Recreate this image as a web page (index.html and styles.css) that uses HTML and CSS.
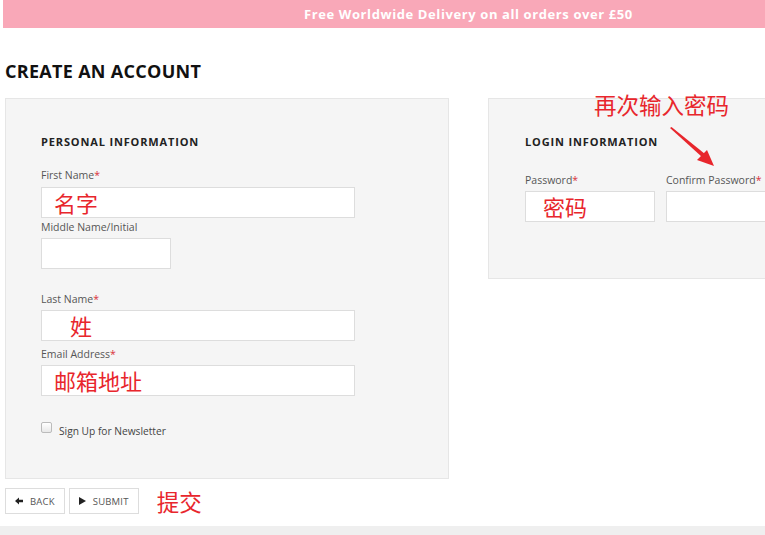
FILE: index.html
```html
<!DOCTYPE html>
<html lang="en">
<head>
<meta charset="utf-8">
<title>Create an Account</title>
<link rel="stylesheet" href="styles.css">
</head>
<body>
<div class="page">
  <div class="promo">Free Worldwide Delivery on all orders over £50</div>
  <main class="content">
    <h1 class="title">CREATE AN ACCOUNT</h1>
    <div class="columns">
      <section class="panel panel-personal">
        <h2 class="panel-title">PERSONAL INFORMATION</h2>
        <div class="field field-first">
          <label class="label">First Name<span class="req">*</span></label>
          <div class="input input-wide pad-a">名字</div>
        </div>
        <div class="field field-middle">
          <label class="label">Middle Name/Initial</label>
          <div class="input input-short"></div>
        </div>
        <div class="field field-last">
          <label class="label">Last Name<span class="req">*</span></label>
          <div class="input input-wide pad-b">姓</div>
        </div>
        <div class="field field-email">
          <label class="label">Email Address<span class="req">*</span></label>
          <div class="input input-wide pad-c">邮箱地址</div>
        </div>
        <div class="check-row">
          <span class="checkbox"></span>
          <span class="check-label">Sign Up for Newsletter</span>
        </div>
      </section>
      <section class="panel panel-login">
        <div class="note">再次输入密码</div>
        <svg class="note-arrow" width="60" height="50" viewBox="0 0 60 50">
          <polygon points="2,2 3.5,1 37,28 34,31" fill="#e8262c"/>
          <polygon points="46,40 29,34 39,24" fill="#e8262c"/>
        </svg>
        <h2 class="panel-title login-title">LOGIN INFORMATION</h2>
        <div class="pw-row">
          <div class="field">
            <label class="label">Password<span class="req">*</span></label>
            <div class="input input-short pad-d">密码</div>
          </div>
          <div class="field">
            <label class="label">Confirm Password<span class="req">*</span></label>
            <div class="input input-confirm"></div>
          </div>
        </div>
      </section>
    </div>
    <div class="actions">
      <button class="btn" type="button">
        <svg width="8" height="8" viewBox="0 0 8 8"><path d="M0 4 L4 0.5 L4 2.8 L8 2.8 L8 5.2 L4 5.2 L4 7.5 Z" fill="#222"/></svg>
        BACK
      </button>
      <button class="btn" type="button">
        <svg width="7" height="8" viewBox="0 0 7 8"><path d="M0 0 L7 4 L0 8 Z" fill="#222"/></svg>
        SUBMIT
      </button>
      <span class="submit-note">提交</span>
    </div>
  </main>
  <div class="footer-bar"></div>
</div>
</body>
</html>
```
FILE: styles.css
```css
html, body {
  margin: 0;
  padding: 0;
  background: #fff;
  overflow: hidden;
}
.page {
  width: 765px;
  height: 535px;
  overflow: hidden;
  font-family: "Open Sans", "Noto Sans", sans-serif;
  color: #333;
}
.promo {
  margin-left: 3px;
  height: 28px;
  background: #f9a8b8;
  color: #fff;
  font-weight: 700;
  font-size: 13px;
  letter-spacing: 0.6px;
  line-height: 28px;
  padding-left: 301px;
  white-space: nowrap;
}
.content {
  padding-left: 5px;
}
.title {
  margin: 0;
  padding-top: 31px;
  height: 39px;
  font-size: 18px;
  line-height: 24px;
  font-weight: 700;
  color: #111;
  letter-spacing: 0.3px;
}
.columns {
  display: flex;
  gap: 39px;
  align-items: flex-start;
  width: 900px;
}
.panel {
  flex: none;
  background: #f5f5f5;
  border: 1px solid #e6e6e6;
  box-sizing: border-box;
  padding: 35px 0 0 35px;
}
.panel-personal {
  width: 444px;
  height: 381px;
}
.panel-login {
  position: relative;
  width: 330px;
  height: 181px;
  padding-left: 36px;
}
.panel-title {
  margin: 0 0 17px;
  font-size: 11px;
  line-height: 16px;
  font-weight: 700;
  letter-spacing: 0.85px;
  color: #222;
}
.login-title {
  margin-bottom: 22px;
}
.field {
  display: flex;
  flex-direction: column;
}
.label {
  font-size: 10.5px;
  line-height: 16px;
  color: #555;
  margin-bottom: 3px;
}
.field-first .label { margin-bottom: 4px; }
.req {
  color: #d9303a;
}
.field-first { margin-bottom: 1px; }
.field-middle { margin-bottom: 22px; }
.field-last { margin-bottom: 5px; }
.field-email { margin-bottom: 26px; }
.input {
  box-sizing: border-box;
  height: 31px;
  background: #fff;
  border: 1px solid #ddd;
  font-family: "Noto Sans CJK SC", sans-serif;
  font-size: 22px;
  line-height: 29px;
  color: #e8262c;
  white-space: nowrap;
}
.input-wide { width: 314px; }
.input-short { width: 130px; }
.input-confirm { width: 140px; }
.pad-a { padding-left: 12px; }
.pad-b { padding-left: 28px; }
.pad-c { padding-left: 12px; }
.pad-d { padding-left: 17px; }
.check-row {
  display: flex;
  align-items: flex-start;
  gap: 7px;
}
.checkbox {
  width: 9px;
  height: 9px;
  border: 1px solid #bbb;
  border-radius: 2px;
  background: linear-gradient(#fff, #e8e8e8);
}
.check-label {
  font-size: 10.2px;
  line-height: 16px;
  color: #444;
  margin-top: 1px;
}
.pw-row {
  display: flex;
  gap: 11px;
}
.note {
  position: absolute;
  left: 105px;
  top: -9px;
  font-family: "Noto Sans CJK SC", sans-serif;
  font-size: 22.5px;
  line-height: 28px;
  color: #e8262c;
  white-space: nowrap;
}
.note-arrow {
  position: absolute;
  left: 179px;
  top: 27px;
}
.actions {
  display: flex;
  align-items: center;
  gap: 4px;
  margin-top: 9px;
  height: 26px;
}
.btn {
  display: flex;
  align-items: center;
  gap: 7px;
  height: 26px;
  box-sizing: border-box;
  border: 1px solid #ddd;
  background: #fff;
  padding: 0 9px 0 9px;
  font-family: "Open Sans", sans-serif;
  font-size: 9.5px;
  letter-spacing: 0.2px;
  color: #555;
  margin: 0;
}
.submit-note {
  margin-left: 14px;
  font-family: "Noto Sans CJK SC", sans-serif;
  font-size: 22.5px;
  line-height: 26px;
  color: #e8262c;
}
.footer-bar {
  margin-top: 12px;
  height: 20px;
  background: #efefef;
}
```
